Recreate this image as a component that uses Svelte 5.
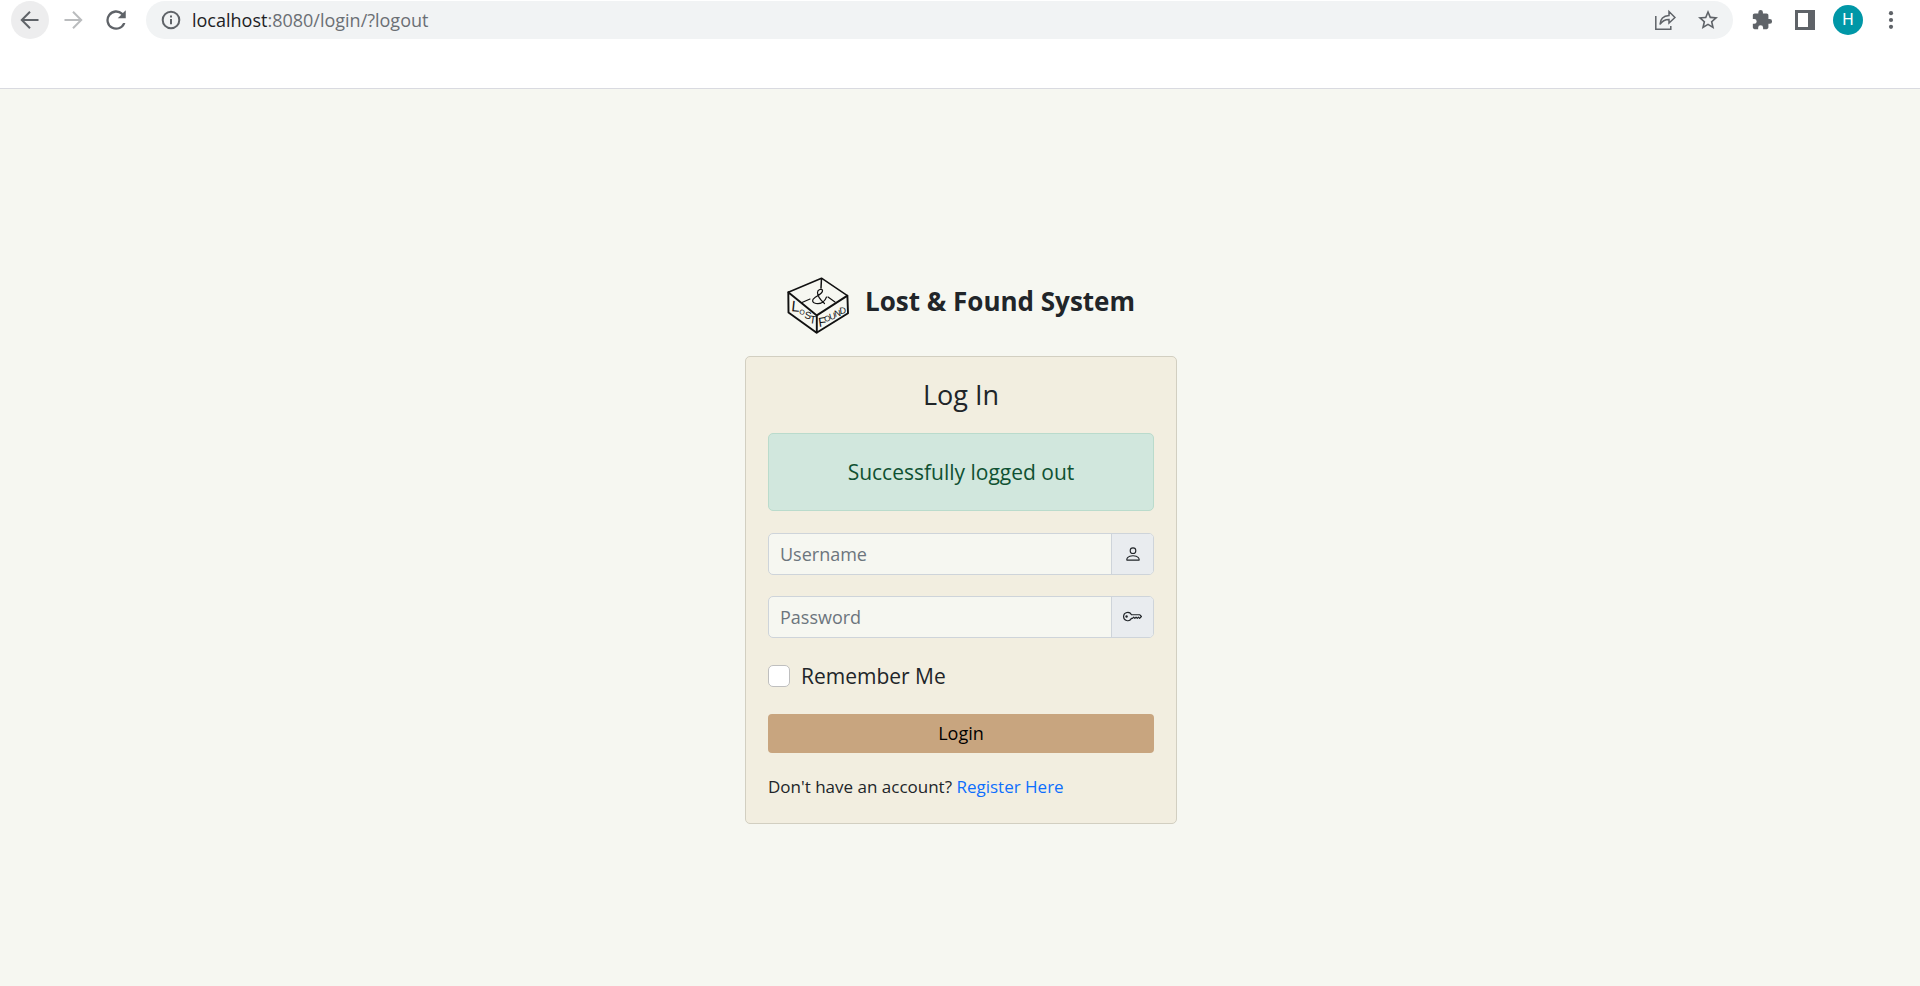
<script lang="ts">
  let username = $state('');
  let password = $state('');
  let remember = $state(false);
</script>

<div class="window">
  <header class="toolbar">
    <nav class="nav" aria-label="Navigation">
      <button class="tool active" aria-label="Back">
        <svg viewBox="0 0 24 24" width="24" height="24" fill="none" stroke="#5f6368" stroke-width="2"><path d="M20.500 12H4.500M12 3.800 3.800 12l8.200 8.200" /></svg>
      </button>
      <button class="tool" aria-label="Forward">
        <svg viewBox="0 0 24 24" width="24" height="24" fill="none" stroke="#babcbe" stroke-width="2"><path d="M3.500 12h16M12 3.800l8.200 8.200-8.200 8.200" /></svg>
      </button>
      <button class="tool" aria-label="Reload">
        <svg viewBox="0 0 24 24" width="26" height="26"><path fill="#5f6368" d="M18.400 5.600A9 9 0 1 0 20.700 14.800h-2.200A6.900 6.900 0 1 1 16.900 7.100L13.600 10.400H21V3z" /></svg>
      </button>
    </nav>
    <div class="address">
      <svg viewBox="0 0 20 20" width="20" height="20" fill="none" stroke="#5f6368" stroke-width="2"><circle cx="10" cy="10" r="8.300" /><path d="M10 9v5.200M10 5.600v2" /></svg>
      <div class="url">localhost<span>:8080/login/?logout</span></div>
      <button class="tool" aria-label="Share">
        <svg viewBox="0 0 22 22" width="22" height="22" fill="none" stroke="#5f6368" stroke-width="1.500"><path d="M1.800 7v13.200h15V17M6 15.500C6.300 9.500 9.500 6.800 15 6.500V2.500l6 6-6 5.500v-3.600c-4.500 0-7 1.600-9 5.100z" /></svg>
      </button>
      <button class="tool" aria-label="Bookmark">
        <svg viewBox="0 0 24 24" width="24" height="24"><path fill="#5f6368" d="M22 9.240l-7.190-.620L12 2 9.190 8.630 2 9.240l5.460 4.730L5.820 21 12 17.270 18.180 21l-1.630-7.030L22 9.240zM12 15.400l-3.760 2.270 1-4.280-3.320-2.880 4.380-.380L12 6.100l1.710 4.040 4.380.380-3.320 2.880 1 4.280L12 15.400z" /></svg>
      </button>
    </div>
    <div class="actions">
      <button class="tool" aria-label="Extensions">
        <svg viewBox="0 0 24 24" width="22" height="22"><path fill="#5f6368" d="M20.500 11H19V7c0-1.100-.900-2-2-2h-4V3.500a2.500 2.500 0 0 0-5 0V5H4c-1.100 0-2 .900-2 2v3.800h1.500a2.700 2.700 0 0 1 0 5.400H2V20c0 1.100.900 2 2 2h3.800v-1.500a2.700 2.700 0 0 1 5.400 0V22H17c1.100 0 2-.900 2-2v-4h1.500a2.500 2.500 0 0 0 0-5z" /></svg>
      </button>
      <button class="tool" aria-label="Side panel">
        <svg viewBox="0 0 20 20" width="20" height="20"><path fill="#5f6368" d="M0 0h20v20H0zM3 3v14h10V3z" fill-rule="evenodd" /></svg>
      </button>
      <button class="avatar" aria-label="Profile H">H</button>
      <button class="tool" aria-label="Menu">
        <svg viewBox="0 0 24 24" width="24" height="24" fill="#5f6368"><circle cx="12" cy="5.200" r="2.100" /><circle cx="12" cy="12" r="2.100" /><circle cx="12" cy="18.800" r="2.100" /></svg>
      </button>
    </div>
  </header>

  <main>
    <div class="brand">
      <svg class="logo" viewBox="0 0 62 57" width="62" height="57" fill="none" stroke="#111" stroke-linejoin="round" stroke-linecap="round" role="img" aria-label="Lost and Found box">
        <path stroke-width="1.500" d="M1.300 15.300 34.500 1.200 60.400 18.600M34.500 1.200 34 11" />
        <path stroke-width="1.900" d="M1.300 15.300 1.500 35.500 29.600 55.800 61 36.200 60.400 18.600 29.800 38.400 1.300 15.300M29.800 38.400V55.800" />
        <path stroke-width="1.200" d="M15 25.500 23 22M41 20l7 5" />
        <path stroke-width="1.200" d="M39.500 20C38 24.500 34 27.300 29 26.500 24.800 25.800 24.500 22.500 28 20.400 31.500 18.300 36 16.200 35.500 13.500 35 11.200 30.500 12.400 30.500 15.500 30.500 19 34 23.500 37.500 26.500" />
        <g class="lettering" fill="#111" stroke="none">
          <text x="4" y="34" transform="rotate(6 4 34)" font-size="15">L</text>
          <text x="12" y="37" transform="rotate(10 12 37)" font-size="7">O</text>
          <text x="17" y="41" transform="rotate(12 17 41)" font-size="10">S</text>
          <text x="22" y="46" transform="rotate(8 22 46)" font-size="11">T</text>
          <text x="32" y="50" transform="rotate(-8 32 50)" font-size="13">F</text>
          <text x="38" y="45" transform="rotate(-15 38 45)" font-size="8">O</text>
          <text x="43" y="43" transform="rotate(-14 43 43)" font-size="9">U</text>
          <text x="48" y="40" transform="rotate(-12 48 40)" font-size="9">N</text>
          <text x="53" y="37" transform="rotate(-8 53 37)" font-size="9">D</text>
        </g>
      </svg>
      <h1>Lost &amp; Found System</h1>
    </div>

    <form class="card" onsubmit={(e) => e.preventDefault()}>
      <h2>Log In</h2>
      <div class="alert" role="status">Successfully logged out</div>

      <div class="group">
        <input type="text" placeholder="Username" aria-label="Username" bind:value={username} />
        <span class="addon">
          <svg viewBox="0 0 16 16" width="18" height="18" fill="#212529"><path d="M8 8a3 3 0 1 0 0-6 3 3 0 0 0 0 6zm2-3a2 2 0 1 1-4 0 2 2 0 0 1 4 0zm4 8c0 1-1 1-1 1H3s-1 0-1-1 1-4 6-4 6 3 6 4zm-1-.004c-.001-.246-.154-.986-.832-1.664C11.516 10.680 10.289 10 8 10c-2.290 0-3.516.680-4.168 1.332-.678.678-.830 1.418-.832 1.664h10z" /></svg>
        </span>
      </div>

      <div class="group">
        <input type="password" placeholder="Password" aria-label="Password" bind:value={password} />
        <span class="addon">
          <svg viewBox="0 0 16 16" width="19" height="19" fill="#212529"><path d="M0 8a4 4 0 0 1 7.465-2H14a.5.5 0 0 1 .354.146l1.500 1.500a.5.5 0 0 1 0 .708l-1.500 1.500a.5.5 0 0 1-.708 0L13 9.207l-.646.647a.5.5 0 0 1-.708 0L11 9.207l-.646.647a.5.5 0 0 1-.708 0L9 9.207l-.646.647A.5.5 0 0 1 8 10h-.535A4 4 0 0 1 0 8zm4-3a3 3 0 1 0 2.712 4.285A.5.5 0 0 1 7.163 9h.630l.853-.854a.5.5 0 0 1 .708 0l.646.647.646-.647a.5.5 0 0 1 .708 0l.646.647.646-.647a.5.5 0 0 1 .708 0l.646.647.793-.793-1-1h-6.630a.5.5 0 0 1-.451-.285A3 3 0 0 0 4 5z" /><path d="M4 8a1 1 0 1 1-2 0 1 1 0 0 1 2 0z" /></svg>
        </span>
      </div>

      <label class="remember">
        <input type="checkbox" bind:checked={remember} />
        Remember Me
      </label>

      <button class="login" type="submit">Login</button>
      <p>Don't have an account? <a href="#register">Register Here</a></p>
    </form>
  </main>
</div>

<style>
  :global(body) {
    margin: 0;
    background: #f6f7f1;
  }
  .window {
    min-height: 100vh;
    display: flex;
    flex-direction: column;
    font-family: "Open Sans", "Noto Sans", sans-serif;
    font-size: 18px;
    line-height: 28px;
    color: #212529;
  }
  .window * {
    box-sizing: border-box;
  }
  button {
    font: inherit;
    border: 0;
    padding: 0;
    cursor: pointer;
  }
  svg {
    display: block;
    flex: none;
  }
  .toolbar {
    display: flex;
    align-items: flex-start;
    height: 89px;
    padding: 1px 10px 0 11px;
    background: #fff;
    border-bottom: 1px solid #d9dae0;
  }
  .nav,
  .actions {
    display: flex;
    align-items: center;
    height: 38px;
    gap: 5px;
  }
  .nav {
    margin-right: 11px;
  }
  .actions {
    margin-left: 10px;
  }
  .tool {
    display: grid;
    place-items: center;
    flex: none;
    width: 38px;
    height: 38px;
    border-radius: 50%;
    background: transparent;
  }
  .tool.active {
    background: #ededee;
  }
  .address {
    flex: 1;
    display: flex;
    align-items: center;
    gap: 5px;
    height: 38px;
    padding: 0 6px 0 15px;
    border-radius: 19px;
    background: #f1f3f4;
  }
  .url {
    flex: 1;
    padding-left: 6px;
    color: #202124;
  }
  .url span {
    color: #6b6f74;
  }
  .avatar {
    width: 30px;
    height: 30px;
    margin: 0 4px;
    border-radius: 50%;
    background: #0097a7;
    color: #fff;
    font-family: Roboto, sans-serif;
    font-size: 16px;
    line-height: 30px;
  }
  main {
    flex: 1;
    display: flex;
    flex-direction: column;
    align-items: center;
    justify-content: center;
    padding: 25px 16px 0 18px;
    background: #f6f7f1;
  }
  .brand {
    display: flex;
    align-items: center;
    gap: 16px;
    margin-bottom: 22px;
  }
  .lettering {
    font-family: "Liberation Sans Narrow", "Liberation Sans", sans-serif;
  }
  h1,
  h2 {
    margin: 0;
    line-height: 32px;
  }
  h1 {
    font-size: 26px;
    font-weight: 700;
    padding-bottom: 8px;
  }
  h2 {
    font-size: 27px;
    font-weight: 500;
    text-align: center;
  }
  .card {
    width: 100%;
    max-width: 432px;
    display: flex;
    flex-direction: column;
    padding: 22px;
    border: 1px solid #d2cfc1;
    border-radius: 5px;
    background: #f2eee0;
  }
  .alert {
    margin-top: 22px;
    padding: 22px;
    border: 1px solid #badbcc;
    border-radius: 5px;
    background: #d1e7dd;
    color: #0f5132;
    font-size: 21px;
    line-height: 32px;
    text-align: center;
  }
  .group {
    display: flex;
    height: 42px;
    margin-top: 21px;
    border: 1px solid #ced4da;
    border-radius: 5px;
    overflow: hidden;
    background: #f6f7f1;
  }
  .alert + .group {
    margin-top: 22px;
  }
  .group input {
    flex: 1;
    min-width: 0;
    border: 0;
    padding: 0 11px;
    background: transparent;
    color: inherit;
    font: inherit;
  }
  .group input::placeholder {
    color: #6c757d;
    opacity: 1;
  }
  .addon {
    display: grid;
    place-items: center;
    width: 42px;
    border-left: 1px solid #ced4da;
    background: #e9ecef;
  }
  .remember {
    display: flex;
    align-items: center;
    gap: 11px;
    margin-top: 22px;
    font-size: 21px;
    line-height: 32px;
  }
  .remember input {
    appearance: none;
    width: 22px;
    height: 22px;
    margin: 0;
    border: 1px solid #bfbfbf;
    border-radius: 5px;
    background: #fff;
  }
  .remember input:checked {
    background: #0d6efd;
  }
  .login {
    height: 39px;
    margin-top: 22px;
    border-radius: 4px;
    background: #c8a57f;
    color: #000;
  }
  p {
    margin: 20px 0 0;
    font-size: 17px;
  }
  a {
    color: #0d6efd;
    text-decoration: none;
  }
</style>
